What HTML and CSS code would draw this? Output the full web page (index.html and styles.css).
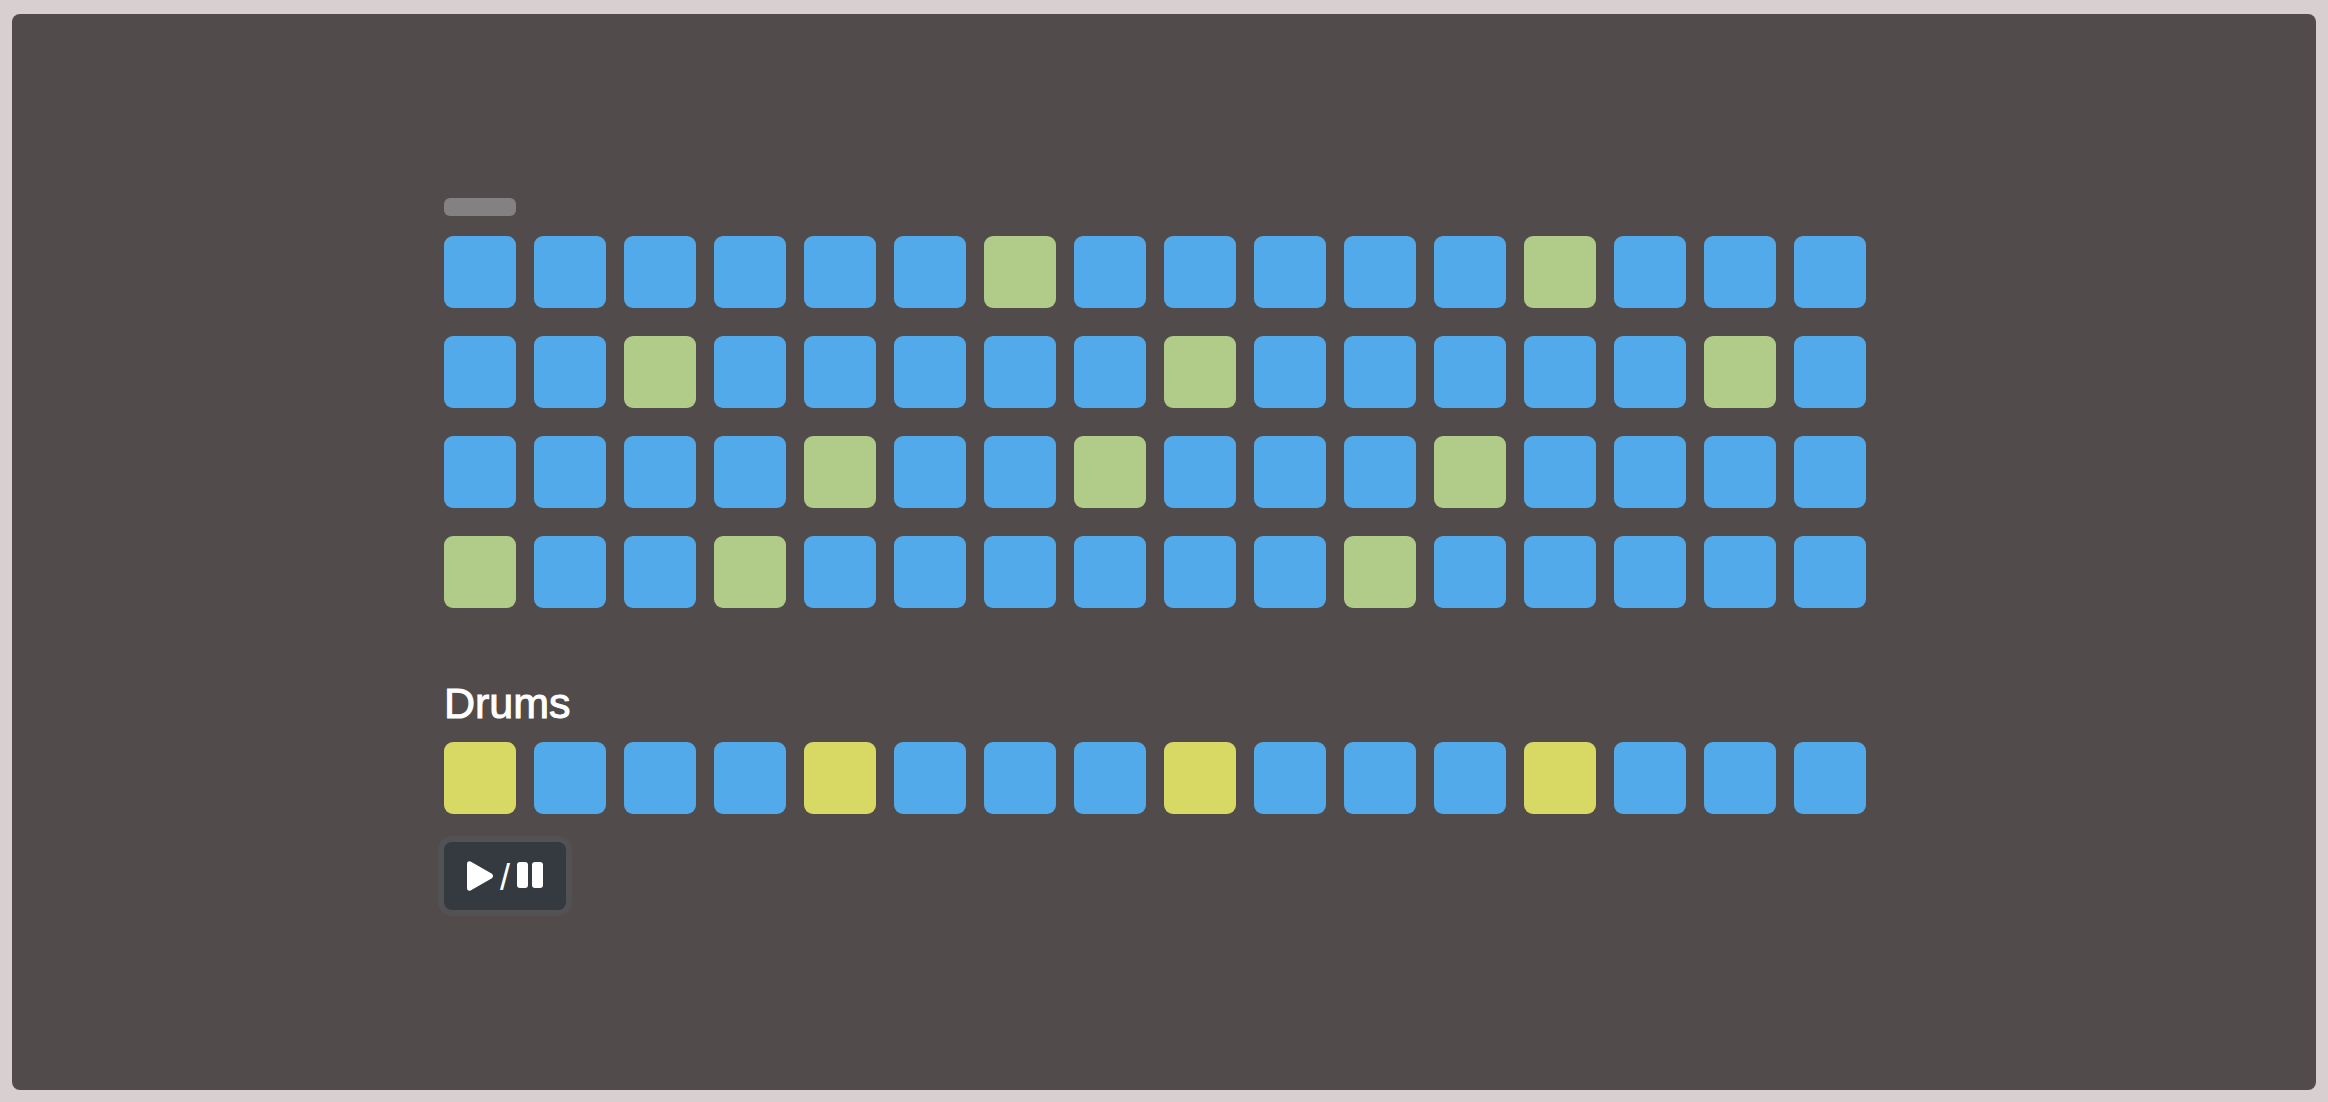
FILE: index.html
```html
<!DOCTYPE html>
<html lang="en">
<head>
<meta charset="utf-8">
<meta name="viewport" content="width=device-width, initial-scale=1">
<title>Step sequencer</title>
<link rel="stylesheet" href="styles.css">
<script src="sequencer.js" defer></script>
</head>
<body>
<main class="panel">
  <div class="sequencer">
    <div class="playhead"></div>
    <div class="melody">
      <div class="track" role="group" aria-label="Note 1" data-pattern="......x.....x..."></div>
      <div class="track" role="group" aria-label="Note 2" data-pattern="..x.....x.....x."></div>
      <div class="track" role="group" aria-label="Note 3" data-pattern="....x..x...x...."></div>
      <div class="track" role="group" aria-label="Note 4" data-pattern="x..x......x....."></div>
    </div>
    <h1 class="title">Drums</h1>
    <div class="track track-drums" role="group" aria-label="Drums" data-pattern="x...x...x...x..."></div>
    <button class="toggle" type="button" aria-label="Play / Pause">
      <svg class="icon" width="26" height="30" viewBox="0 0 26 30" aria-hidden="true"><path d="M0 3C0 .5 2-.5 4 .8L24.500 12.500C26.500 13.800 26.500 16.200 24.500 17.500L4 29.200C2 30.500 0 29.500 0 27Z"/></svg>
      <span class="slash">/</span>
      <svg class="icon" width="26" height="28" viewBox="0 0 26 28" aria-hidden="true"><rect width="11" height="26" rx="3"/><rect x="15" width="11" height="26" rx="3"/></svg>
    </button>
  </div>
</main>
</body>
</html>
```
FILE: styles.css
```css
* {
  box-sizing: border-box;
}

body {
  margin: 0;
  min-height: 100vh;
  padding: 14px 12px 12px;
  display: flex;
  background: #d8cfd0;
  font-family: "Liberation Sans", Arial, sans-serif;
}

.panel {
  flex: 1;
  display: flex;
  align-items: center;
  justify-content: center;
  border-radius: 8px;
  background: #514b4b;
}

.sequencer {
  padding: 4px 18px 0 0;
}

.playhead {
  width: 72px;
  height: 18px;
  margin-bottom: 20px;
  border-radius: 6px;
  background: #838181;
}

.melody {
  display: grid;
  gap: 28px;
}

.track {
  display: grid;
  grid-template-columns: repeat(16, 72px);
  gap: 18px;
}

.step {
  appearance: none;
  width: 72px;
  height: 72px;
  margin: 0;
  border-radius: 9px;
  background: #53aaea;
  cursor: pointer;
}

.step:checked {
  background: #b1cb88;
}

.track-drums .step:checked {
  background: #d8d964;
}

.title {
  margin: 71px 0 15px;
  color: #fff;
  font-size: 43px;
  font-weight: 400;
  line-height: 48px;
  -webkit-text-stroke: 1px #fff;
}

.toggle {
  display: flex;
  align-items: center;
  justify-content: center;
  gap: 7px;
  width: 122px;
  height: 68px;
  margin-top: 28px;
  padding: 0;
  border: 0;
  border-radius: 8px;
  background: #343a40;
  box-shadow: 0 0 0 6px #525154;
  color: #fff;
  cursor: pointer;
}

.icon {
  flex: none;
  fill: #fff;
}

.slash {
  padding-top: 4px;
  font: 36px/40px "Liberation Sans", Arial, sans-serif;
}
```
FILE: sequencer.js
```js
document.querySelectorAll('.track').forEach((track) => {
  [...track.dataset.pattern].forEach((mark, i) => {
    const step = document.createElement('input');
    step.type = 'checkbox';
    step.className = 'step';
    step.checked = mark === 'x';
    step.setAttribute('aria-label', `${track.getAttribute('aria-label')}, step ${i + 1}`);
    track.append(step);
  });
});
```
